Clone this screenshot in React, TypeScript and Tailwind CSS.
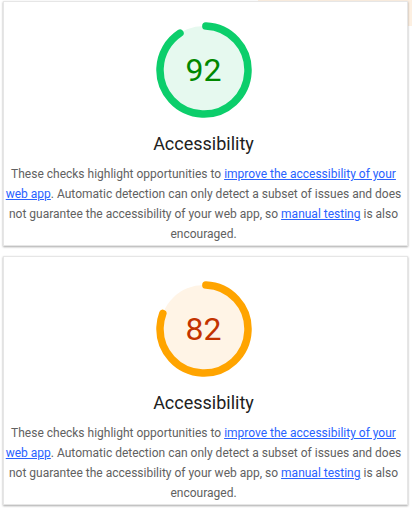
import React from "react";

type GaugeProps = { score: number; stroke: string; fill: string; text: string };

function Gauge({ score, stroke, fill, text }: GaugeProps) {
  const r = 44;
  const sw = 7.5;
  const circ = 2 * Math.PI * r;
  const gap = 0.75 * sw;
  const rot = -90 + ((0.25 * sw) / circ) * 360;
  return (
    <div className="relative h-[96px] w-[96px]">
      <svg viewBox="0 0 96 96" className="h-[96px] w-[96px]">
        <circle cx="48" cy="48" r={r} fill={fill} />
        <circle
          cx="48"
          cy="48"
          r={r}
          fill="none"
          stroke={stroke}
          strokeWidth={sw}
          strokeLinecap="round"
          strokeDasharray={`${(score / 100) * circ - gap} ${circ}`}
          transform={`rotate(${rot} 48 48)`}
        />
      </svg>
      <div
        className="absolute inset-0 flex items-center justify-center text-[32px] leading-none"
        style={{ color: text }}
      >
        {score}
      </div>
    </div>
  );
}

function Card({ score, tone, top }: { score: number; tone: "pass" | "average"; top: string }) {
  const colors =
    tone === "pass"
      ? { stroke: "#0cce6b", fill: "#e6f9ef", text: "#008800" }
      : { stroke: "#ffa400", fill: "#fff4e6", text: "#c33300" };
  return (
    <div
      className={`flex w-[405px] flex-col items-center border border-[#e6e6e6] bg-white pb-[1px] pl-[1px] pr-[5px] shadow-[0_1px_2px_rgba(0,0,0,0.35)] ${top}`}
    >
      <Gauge score={score} {...colors} />
      <div className="mt-[14px] text-[18px] leading-[24px] text-[#212121]">Accessibility</div>
      <p className="mt-[8px] text-center text-[12px] leading-[20px] text-[#616161]">
        These checks highlight opportunities to{" "}
        <a href="#" className="text-[#2962ff] underline">
          improve the accessibility of your web app
        </a>
        . Automatic detection can only detect a subset of issues and does not guarantee the
        accessibility of your web app, so{" "}
        <a href="#" className="text-[#2962ff] underline">
          manual testing
        </a>{" "}
        is also encouraged.
      </p>
    </div>
  );
}

export default function App() {
  return (
    <div className="relative h-[517px] w-[412px] overflow-hidden bg-white font-['Roboto',_'Liberation_Sans',_sans-serif]">
      <div className="absolute right-0 top-0 h-[26px] w-[154px] bg-[#fdf0e2]" />
      <div className="relative flex flex-col pl-[3px] pt-[1px]">
        <Card score={92} tone="pass" top="pt-[20px]" />
        <div className="h-[10px]" />
        <Card score={82} tone="average" top="pt-[24px]" />
      </div>
    </div>
  );
}
